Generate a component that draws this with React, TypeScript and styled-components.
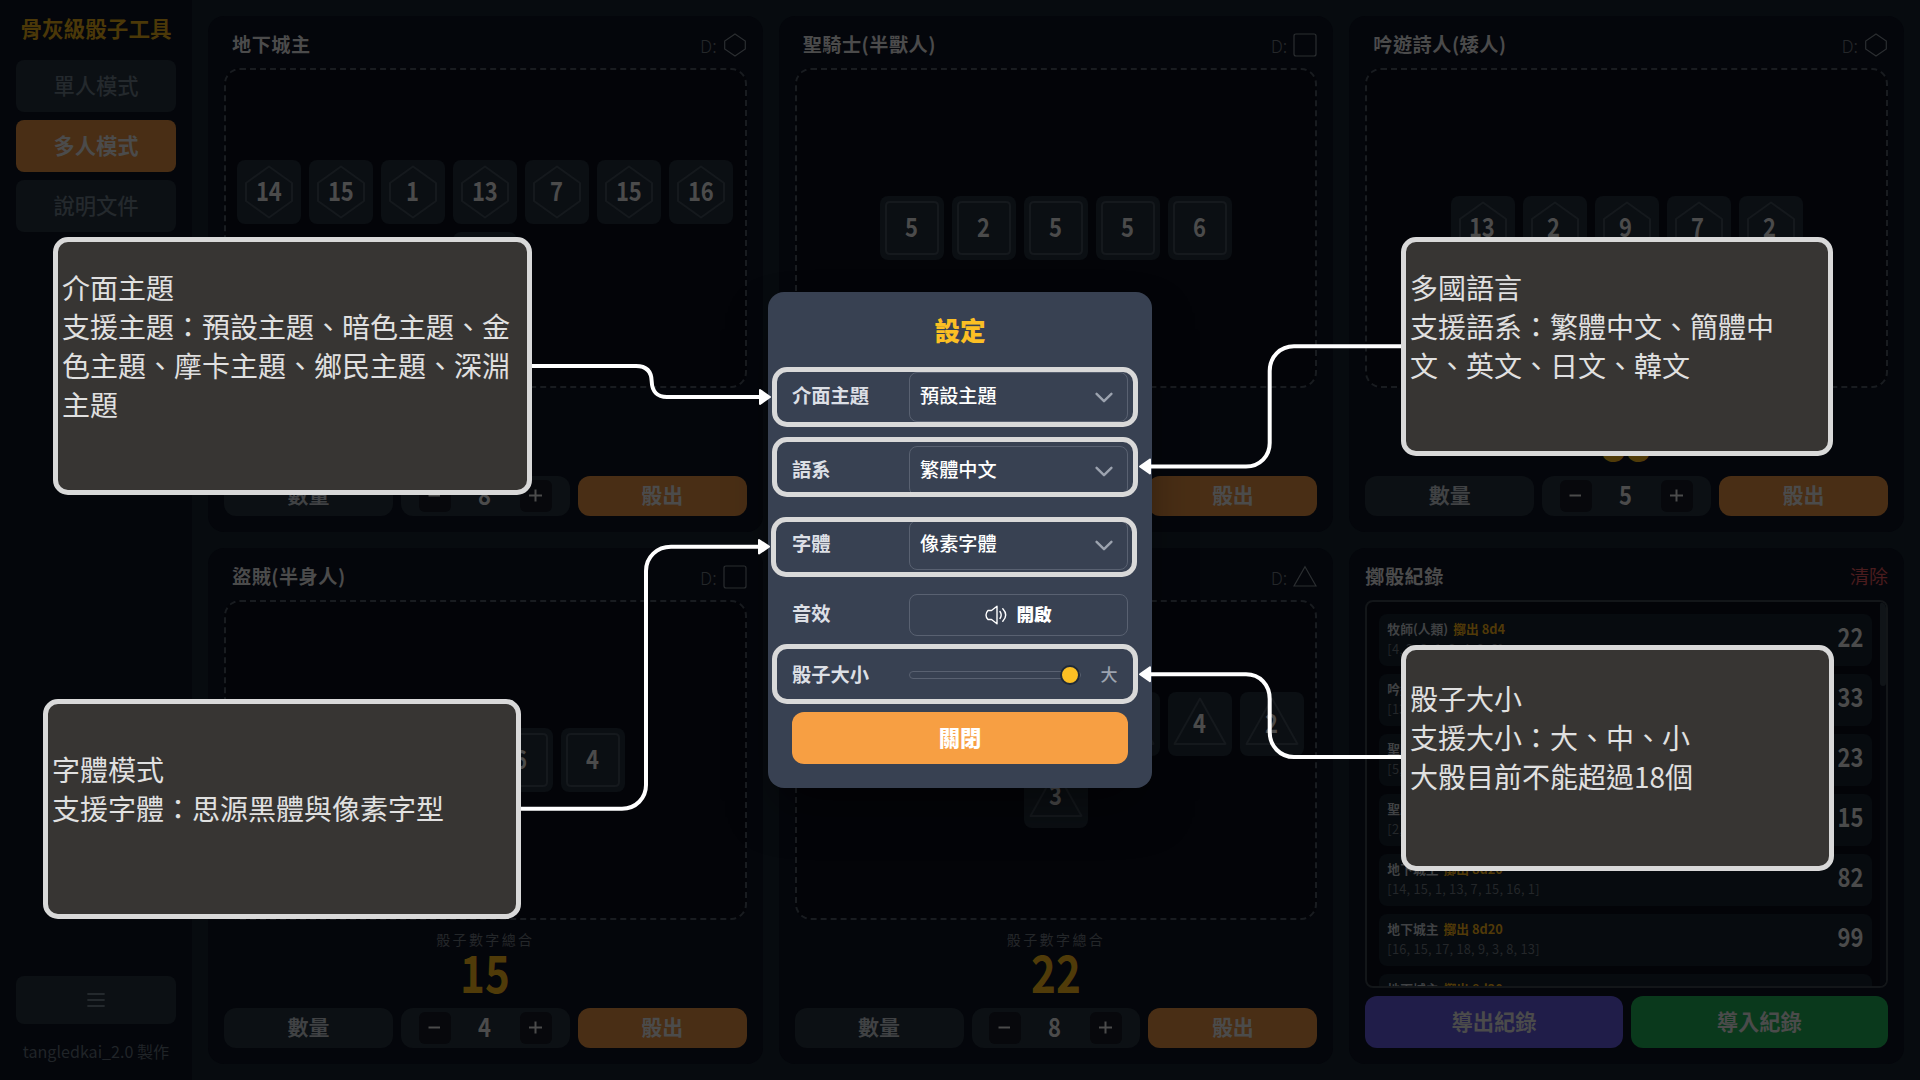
import React from "react";
import styled, { createGlobalStyle, css } from "styled-components";

const GlobalStyle = createGlobalStyle`
  * { box-sizing: border-box; }
  html, body { margin: 0; padding: 0; background: #070b0f; overflow: hidden; }
  body { font-family: "Noto Sans CJK TC", "Noto Sans", sans-serif; }
  button { font: inherit; border: 0; padding: 0; cursor: pointer; }
`;

const Screen = styled.div`
  position: relative;
  display: flex;
  width: 1920px;
  height: 1080px;
  overflow: hidden;
  background: #070b0f;
`;

/* ---------- sidebar ---------- */

const Sidebar = styled.aside`
  display: flex;
  flex-direction: column;
  gap: 8px;
  width: 192px;
  padding: 16px;
  background: #04060b;
`;

const Brand = styled.h1`
  margin: 0 0 10px;
  height: 26px;
  font-size: 21.6px;
  line-height: 24px;
  font-weight: 700;
  text-align: center;
  white-space: nowrap;
  color: #4b3808;
`;

const NavButton = styled.button<{ $active?: boolean }>`
  height: 52px;
  border-radius: 8px;
  font-size: 21.3px;
  line-height: 48px;
  padding-bottom: 3px;
  font-weight: ${(p) => (p.$active ? 700 : 500)};
  color: ${(p) => (p.$active ? "#4b4b4b" : "#24292d")};
  background: ${(p) => (p.$active ? "#492e15" : "#0c1014")};
`;

const MenuButton = styled.button`
  display: flex;
  align-items: center;
  justify-content: center;
  height: 48px;
  margin-top: auto;
  border-radius: 8px;
  background: #0c1014;
`;

const Credit = styled.div`
  height: 24px;
  margin-top: 8px;
  font-size: 16.1px;
  line-height: 22px;
  text-align: center;
  white-space: nowrap;
  color: #202428;
`;

/* ---------- board ---------- */

const Board = styled.main`
  flex: 1;
  display: grid;
  grid-template-columns: repeat(3, 1fr);
  grid-template-rows: repeat(2, 1fr);
  gap: 16px;
  padding: 16px;
`;

const Card = styled.section`
  display: flex;
  flex-direction: column;
  min-width: 0;
  min-height: 0;
  padding: 16px;
  border-radius: 16px;
  background: #04060b;
`;

const CardHeader = styled.header<{ $flush?: boolean }>`
  display: flex;
  align-items: center;
  justify-content: space-between;
  height: 26px;
  margin-bottom: 10px;
  padding-left: ${(p) => (p.$flush ? 0 : 8)}px;
`;

const CardTitle = styled.h2`
  margin: 0;
  font-size: 19.2px;
  line-height: 24px;
  padding-bottom: 2px;
  font-weight: 700;
  letter-spacing: 0.45px;
  color: #4b4b4b;
`;

const DieType = styled.span`
  display: flex;
  align-items: center;
  gap: 6px;
  font-size: 18px;
  line-height: 26px;
  font-weight: 300;
  color: #24272a;
`;

const Tray = styled.div`
  flex: 1;
  display: flex;
  flex-wrap: wrap;
  align-content: center;
  justify-content: center;
  gap: 8px;
  padding: 8px;
  border: 2px dashed #191c20;
  border-radius: 16px;
  background: #030408;
`;

const Die = styled.div`
  display: grid;
  place-items: center;
  width: 64px;
  height: 64px;
  border-radius: 8px;
  background: #0b0f13;
  & > * { grid-area: 1 / 1; }
`;

const Digits = styled.span`
  display: inline-block;
  font-size: 25px;
  font-weight: 700;
  transform: scale(0.88, 1.05);
  color: #4b4b4b;
`;

const DieValue = styled(Digits)`
  line-height: 58px;
  padding: 0 2px 4px 0;
`;

const SumBlock = styled.div`
  display: flex;
  flex-direction: column;
  align-items: center;
  height: 88px;
  padding-top: 9px;
`;

const SumLabel = styled.span`
  font-size: 14px;
  line-height: 20px;
  letter-spacing: 2.4px;
  color: #24272a;
`;

const SumValue = styled.strong`
  font-size: 49px;
  line-height: 43px;
  font-weight: 700;
  transform: scale(0.86, 1.06);
  color: #503b09;
`;

const Controls = styled.div`
  display: grid;
  grid-template-columns: repeat(3, 1fr);
  gap: 8px;
  height: 40px;
`;

const cell = css`
  border-radius: 12px;
  font-size: 21px;
  line-height: 37px;
  font-weight: 700;
  text-align: center;
  color: #4b4b4b;
`;

const CountLabel = styled.div`
  ${cell}
  background: #0c1014;
  color: #404244;
`;

const RollButton = styled.button`
  ${cell}
  padding-bottom: 3px;
  background: #492e15;
`;

const Stepper = styled.div`
  ${cell}
  display: flex;
  align-items: center;
  justify-content: center;
  background: #0c1014;
`;

const StepButton = styled.button`
  display: grid;
  place-items: center;
  width: 32px;
  height: 32px;
  border-radius: 6px;
  background: #07080c;
`;

const StepValue = styled(Digits)`
  width: 69px;
  padding: 0 2px 3px 0;
`;

/* ---------- history ---------- */

const ClearButton = styled.button`
  background: none;
  font-size: 19px;
  line-height: 24px;
  padding-bottom: 2px;
  color: #4a1c1e;
`;

const HistoryBox = styled.div`
  display: flex;
  height: 388px;
  overflow: hidden;
  border: 2px solid #131619;
  border-radius: 8px;
  background: #030408;
`;

const HistoryList = styled.div`
  flex: 1;
  display: flex;
  flex-direction: column;
  gap: 8px;
  padding: 12px 8px 0 12px;
`;

const ScrollTrack = styled.div`
  width: 6px;
  background: #04060b;
`;

const ScrollThumb = styled.div`
  height: 84px;
  border-radius: 3px;
  background: #101418;
`;

const HistoryRow = styled.div`
  flex: none;
  display: flex;
  align-items: center;
  justify-content: space-between;
  height: 52px;
  padding: 0 8px;
  border-radius: 8px;
  background: #070b0f;
`;

const HistoryText = styled.div`
  display: flex;
  flex-direction: column;
  padding-bottom: 2px;
  font-size: 12.8px;
  line-height: 20px;
  white-space: nowrap;
`;

const HistoryName = styled.span`
  font-weight: 700;
  color: #404244;
  em { font-style: normal; color: #513a08; margin-left: 5px; }
`;

const HistoryRolls = styled.span`
  letter-spacing: 0.22px;
  color: #24272a;
`;

const HistoryTotal = styled(Digits)`
  line-height: 44px;
  padding-bottom: 8px;
  transform-origin: right center;
`;

const HistoryActions = styled.div`
  display: grid;
  grid-template-columns: 1fr 1fr;
  gap: 8px;
  height: 52px;
  margin-top: 8px;
`;

const ActionButton = styled.button<{ $tone: string }>`
  border-radius: 12px;
  font-size: 21.3px;
  line-height: 48px;
  padding-bottom: 3px;
  font-weight: 700;
  color: #4b4b4b;
  background: ${(p) => p.$tone};
`;

/* ---------- settings dialog ---------- */

const Overlay = styled.div`
  position: absolute;
  inset: 0;
  display: flex;
  align-items: center;
  justify-content: center;
`;

const Dialog = styled.div`
  display: flex;
  flex-direction: column;
  gap: 24px;
  width: 384px;
  padding: 24px;
  border-radius: 16px;
  background: #384152;
  box-shadow: 0 25px 50px -12px rgba(0, 0, 0, 0.5);
`;

const DialogTitle = styled.h2`
  margin: 0;
  height: 32px;
  font-size: 25.6px;
  line-height: 28px;
  font-weight: 900;
  text-align: center;
  color: #fbbf24;
`;

const Field = styled.div<{ $height: number }>`
  display: grid;
  grid-template-columns: 117px 1fr;
  align-items: center;
  height: ${(p) => p.$height}px;
`;

const FieldLabel = styled.span`
  font-size: 19.3px;
  line-height: 28px;
  font-weight: 700;
  color: #dcdfe5;
  padding-bottom: 4px;
`;

const SelectBox = styled.div`
  display: flex;
  align-items: center;
  justify-content: space-between;
  height: 50px;
  padding: 0 14px 0 10px;
  border: 1px solid #596171;
  border-radius: 8px;
  font-size: 19.2px;
  line-height: 28px;
  font-weight: 500;
  color: #fff;
  span { padding-bottom: 4px; }
`;

const ToggleBox = styled.button`
  display: flex;
  align-items: center;
  justify-content: center;
  gap: 9px;
  height: 42px;
  border: 1px solid #596171;
  border-radius: 8px;
  background: none;
  font-size: 17.6px;
  line-height: 28px;
  font-weight: 900;
  color: #fff;
  span { padding-bottom: 3px; }
`;

const SliderBox = styled.div`
  display: flex;
  align-items: center;
  justify-content: space-between;
  padding-bottom: 2px;
`;

const SliderTrack = styled.div`
  display: flex;
  align-items: center;
  justify-content: flex-end;
  width: 172px;
  height: 8px;
  border: 1px solid #596171;
  border-radius: 4px;
`;

const SliderThumb = styled.i`
  flex: none;
  width: 20px;
  height: 20px;
  border: 2px solid #1f2937;
  border-radius: 50%;
  background: #fbbf24;
`;

const SliderValue = styled.span`
  width: 38px;
  font-size: 17px;
  line-height: 24px;
  font-weight: 500;
  text-align: center;
  color: #9ca3af;
  padding-bottom: 2px;
`;

const CloseButton = styled.button`
  height: 52px;
  padding-bottom: 3px;
  border-radius: 12px;
  background: #f79f43;
  font-size: 21.3px;
  line-height: 48px;
  font-weight: 900;
  color: #fff;
`;

/* ---------- guide annotations, floating above the page ---------- */

type Box = { x: number; y: number; w: number; h: number };

const floating = css<{ $box: Box }>`
  position: absolute;
  left: ${(p) => p.$box.x}px;
  top: ${(p) => p.$box.y}px;
  width: ${(p) => p.$box.w}px;
  height: ${(p) => p.$box.h}px;
  border: 5px solid #d9d9d9;
  border-radius: 15px;
`;

const Highlight = styled.div<{ $box: Box }>`
  ${floating}
`;

const Callout = styled.div<{ $box: Box }>`
  ${floating}
  display: flex;
  flex-direction: column;
  justify-content: center;
  padding: 0 4px 2px;
  background: #373533;
  font-size: 28px;
  line-height: 39px;
  font-weight: 400;
  color: #e0e0e0;
`;

const CalloutLine = styled.p`
  margin: 0;
  min-height: 39px;
`;

const Connectors = styled.svg`
  position: absolute;
  inset: 0;
  pointer-events: none;
`;

/* ---------- data ---------- */

type Shape = "hex" | "square" | "triangle";

interface Player {
  name: string;
  shape: Shape;
  dice: number[];
  sum: number;
}

const players: Player[] = [
  { name: "地下城主", shape: "hex", dice: [14, 15, 1, 13, 7, 15, 16, 1], sum: 82 },
  { name: "聖騎士(半獸人)", shape: "square", dice: [5, 2, 5, 5, 6], sum: 23 },
  { name: "吟遊詩人(矮人)", shape: "hex", dice: [13, 2, 9, 7, 2], sum: 33 },
  { name: "盜賊(半身人)", shape: "square", dice: [2, 3, 6, 4], sum: 15 },
  { name: "牧師(人類)", shape: "triangle", dice: [4, 2, 3, 1, 3, 4, 2, 3], sum: 22 },
];

const history = [
  { name: "牧師(人類)", roll: "8d4", dice: [4, 2, 3, 1, 3, 4, 2, 3], total: 22 },
  { name: "吟遊詩人(矮人)", roll: "5d20", dice: [13, 2, 9, 7, 2], total: 33 },
  { name: "聖騎士(半獸人)", roll: "5d6", dice: [5, 2, 5, 5, 6], total: 23 },
  { name: "聖騎士(半獸人)", roll: "4d6", dice: [2, 3, 6, 4], total: 15 },
  { name: "地下城主", roll: "8d20", dice: [14, 15, 1, 13, 7, 15, 16, 1], total: 82 },
  { name: "地下城主", roll: "8d20", dice: [16, 15, 17, 18, 9, 3, 8, 13], total: 99 },
  { name: "地下城主", roll: "8d20", dice: [12, 4, 9, 18, 7, 3, 8, 13], total: 74 },
];

const outlines: Record<Shape, string> = {
  hex: "M32 6.5 L55 23 V41 L32 57.5 L9 41 V23 Z",
  square: "M10 6 H54 Q58 6 58 10 V54 Q58 58 54 58 H10 Q6 58 6 54 V10 Q6 6 10 6 Z",
  triangle: "M32 6.5 L57.5 52 H6.5 Z",
};

const typeOutlines: Record<Shape, string> = {
  hex: "M12 1 L22.3 8 V16 L12 23 L1.7 16 V8 Z",
  square: "M3 1 H21 Q23 1 23 3 V21 Q23 23 21 23 H3 Q1 23 1 21 V3 Q1 1 3 1 Z",
  triangle: "M12 1.8 L23 21 H1 Z",
};

function PlayerCard({ name, shape, dice, sum }: Player) {
  return (
    <Card>
      <CardHeader>
        <CardTitle>{name}</CardTitle>
        <DieType>
          D:
          <svg width="24" height="24" viewBox="0 0 24 24" fill="none" stroke="#2b2e31" strokeWidth="1.2">
            <path d={typeOutlines[shape]} />
          </svg>
        </DieType>
      </CardHeader>
      <Tray>
        {dice.map((value, i) => (
          <Die key={i}>
            <svg width="64" height="64" viewBox="0 0 64 64" fill="none" stroke="#15191d" strokeWidth="2" strokeLinejoin="round">
              <path d={outlines[shape]} />
            </svg>
            <DieValue>{value}</DieValue>
          </Die>
        ))}
      </Tray>
      <SumBlock>
        <SumLabel>骰子數字總合</SumLabel>
        <SumValue>{sum}</SumValue>
      </SumBlock>
      <Controls>
        <CountLabel>數量</CountLabel>
        <Stepper>
          <StepButton>
            <svg width="14" height="14" viewBox="0 0 14 14" stroke="#4b4b4b" strokeWidth="2"><path d="M0.5 6.5 H12" /></svg>
          </StepButton>
          <StepValue>{dice.length}</StepValue>
          <StepButton>
            <svg width="14" height="14" viewBox="0 0 14 14" stroke="#4b4b4b" strokeWidth="2"><path d="M0 6.5 H13 M6.5 0.5 V12.5" /></svg>
          </StepButton>
        </Stepper>
        <RollButton>骰出</RollButton>
      </Controls>
    </Card>
  );
}

function HistoryCard() {
  return (
    <Card>
      <CardHeader $flush>
        <CardTitle>擲骰紀錄</CardTitle>
        <ClearButton>清除</ClearButton>
      </CardHeader>
      <HistoryBox>
        <HistoryList>
          {history.map((h, i) => (
            <HistoryRow key={i}>
              <HistoryText>
                <HistoryName>{h.name}<em>擲出 {h.roll}</em></HistoryName>
                <HistoryRolls>[{h.dice.join(", ")}]</HistoryRolls>
              </HistoryText>
              <HistoryTotal>{h.total}</HistoryTotal>
            </HistoryRow>
          ))}
        </HistoryList>
        <ScrollTrack><ScrollThumb /></ScrollTrack>
      </HistoryBox>
      <HistoryActions>
        <ActionButton $tone="#201d49">導出紀錄</ActionButton>
        <ActionButton $tone="#0a391c">導入紀錄</ActionButton>
      </HistoryActions>
    </Card>
  );
}

function SelectField({ label, value }: { label: string; value: string }) {
  return (
    <Field $height={50}>
      <FieldLabel>{label}</FieldLabel>
      <SelectBox>
        <span>{value}</span>
        <svg width="18" height="11" viewBox="0 0 18 11" fill="none" stroke="#9ca3af" strokeWidth="2.4" strokeLinecap="round" strokeLinejoin="round">
          <path d="M1.6 1.8 L9 9.2 L16.4 1.8" />
        </svg>
      </SelectBox>
    </Field>
  );
}

const callouts: { box: Box; lines: string[] }[] = [
  {
    box: { x: 53, y: 237, w: 479, h: 258 },
    lines: ["介面主題", "支援主題：預設主題、暗色主題、金色主題、摩卡主題、鄉民主題、深淵主題", ""],
  },
  {
    box: { x: 1401, y: 237, w: 432, h: 219 },
    lines: ["多國語言", "支援語系：繁體中文、簡體中文、英文、日文、韓文", ""],
  },
  {
    box: { x: 43, y: 699, w: 478, h: 220 },
    lines: ["字體模式", "支援字體：思源黑體與像素字型", ""],
  },
  {
    box: { x: 1401, y: 645, w: 433, h: 226 },
    lines: ["骰子大小", "支援大小：大、中、小", "大骰目前不能超過18個", ""],
  },
];

const highlights: Box[] = [
  { x: 772, y: 367, w: 366, h: 60 },
  { x: 772, y: 437, w: 366, h: 60 },
  { x: 771, y: 517, w: 366, h: 60 },
  { x: 772, y: 644, w: 366, h: 60 },
];

export default function App() {
  return (
    <>
      <GlobalStyle />
      <Screen>
        <Sidebar>
          <Brand>骨灰級骰子工具</Brand>
          <NavButton>單人模式</NavButton>
          <NavButton $active>多人模式</NavButton>
          <NavButton>說明文件</NavButton>
          <MenuButton>
            <svg width="18" height="16" viewBox="0 0 18 16" stroke="#24292d" strokeWidth="1.8" strokeLinecap="round">
              <path d="M1 2 H17 M1 8 H17 M1 14 H17" />
            </svg>
          </MenuButton>
          <Credit>tangledkai_2.0 製作</Credit>
        </Sidebar>
        <Board>
          {players.map((p) => <PlayerCard key={p.name} {...p} />)}
          <HistoryCard />
        </Board>

        <Overlay>
          <Dialog>
            <DialogTitle>設定</DialogTitle>
            <SelectField label="介面主題" value="預設主題" />
            <SelectField label="語系" value="繁體中文" />
            <SelectField label="字體" value="像素字體" />
            <Field $height={42}>
              <FieldLabel>音效</FieldLabel>
              <ToggleBox>
                <svg width="22" height="20" viewBox="0 0 22 20" fill="none" stroke="#fff" strokeWidth="1.4" strokeLinecap="round" strokeLinejoin="round">
                  <path d="M12 1.2 L6.5 5.5 H3 Q1 7.5 1 10 Q1 12.5 3 14.5 H6.5 L12 18.8 Z" />
                  <path d="M15 6.5 Q17.4 10 15 13.5 M17.8 3.8 Q23.6 10 17.8 16.2" />
                </svg>
                <span>開啟</span>
              </ToggleBox>
            </Field>
            <Field $height={28}>
              <FieldLabel>骰子大小</FieldLabel>
              <SliderBox>
                <SliderTrack><SliderThumb /></SliderTrack>
                <SliderValue>大</SliderValue>
              </SliderBox>
            </Field>
            <CloseButton>關閉</CloseButton>
          </Dialog>
        </Overlay>

        {highlights.map((box, i) => <Highlight key={i} $box={box} />)}

        <Connectors width="1920" height="1080" viewBox="0 0 1920 1080" fill="none" stroke="#fff" strokeWidth="4">
          <path d="M531 366 H636 C646 366 651.5 371 651.7 381.5 C652 391 657 397 667 397 H760" />
          <path d="M520 808.7 H622 C636 808.7 646 798 646 785 V571 C646 557 657 546.7 671 546.7 H759" />
          <path d="M1402 346.3 H1294 C1280 346.3 1269.7 357 1269.7 371 V443 C1269.7 456 1260 466.5 1246 466.5 H1150" />
          <path d="M1402 757 H1294 C1280 757 1269.7 746 1269.7 732 V699 C1269.7 685 1260 674.3 1246 674.3 H1150" />
          <g fill="#fff" strokeWidth="2" strokeLinejoin="round">
            <path d="M760 390 L770 397 L760 404 Z" />
            <path d="M759 540 L769 546.7 L759 553.5 Z" />
            <path d="M1150 459.5 L1140 466.5 L1150 473.5 Z" />
            <path d="M1150 667.3 L1140 674.3 L1150 681.3 Z" />
          </g>
        </Connectors>

        {callouts.map(({ box, lines }) => (
          <Callout key={lines[0]} $box={box}>
            {lines.map((line, i) => <CalloutLine key={i}>{line}</CalloutLine>)}
          </Callout>
        ))}
      </Screen>
    </>
  );
}
